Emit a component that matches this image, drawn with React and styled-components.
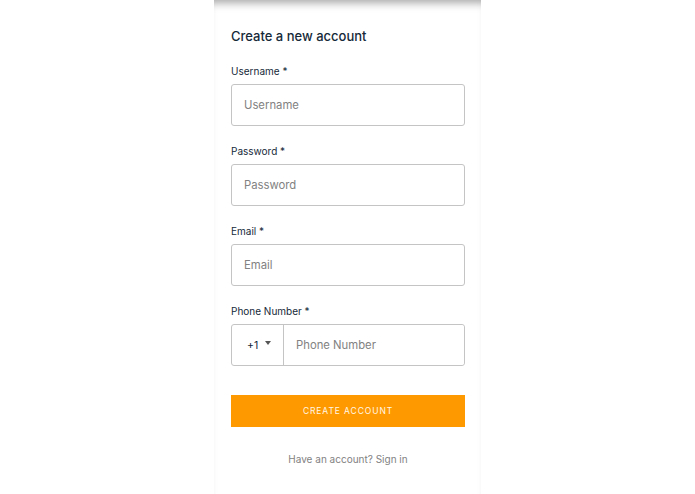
import React from 'react';
import styled, { createGlobalStyle } from 'styled-components';

const GlobalStyle = createGlobalStyle`
  html, body {
    margin: 0;
    padding: 0;
    background: #ffffff;
    font-family: Inter, "Noto Sans", "Liberation Sans", sans-serif;
  }
`;

const Page = styled.div`
  display: flex;
  justify-content: center;
  width: 695px;
  height: 494px;
  overflow: hidden;
`;

const Card = styled.section`
  width: 267px;
  box-sizing: border-box;
  padding: 27px 16px 0 17px;
  background: #fff;
  box-shadow: inset 0 9px 8px -6px rgba(0, 0, 0, 0.35);
`;

const Title = styled.h2`
  margin: 0 0 19px;
  font-size: 13px;
  font-weight: 500;
  color: #152939;
  line-height: 18px;
`;

const Field = styled.div`
  display: flex;
  flex-direction: column;
  margin-bottom: ${(p) => p.gap || 18}px;
`;

const Label = styled.label`
  font-size: 10px;
  color: #152939;
  line-height: 14px;
  margin-bottom: 6px;
`;

const Input = styled.input`
  box-sizing: border-box;
  width: 100%;
  height: 42px;
  padding: 0 12px;
  border: 1px solid #c4c4c4;
  border-radius: 3px;
  font-family: inherit;
  font-size: 11.3px;
  color: #152939;
  outline: none;
  &::placeholder {
    color: #828282;
  }
`;

const PhoneRow = styled.div`
  display: flex;
  height: 42px;
  box-sizing: border-box;
  border: 1px solid #c4c4c4;
  border-radius: 3px;
`;

const CodeSelect = styled.div`
  display: flex;
  align-items: center;
  gap: 7px;
  width: 52px;
  box-sizing: border-box;
  padding-left: 15px;
  border-right: 1px solid #c4c4c4;
  font-size: 10.5px;
  color: #152939;
`;

const Caret = styled.span`
  width: 0;
  height: 0;
  margin-top: -5px;
  border-left: 3.5px solid transparent;
  border-right: 3.5px solid transparent;
  border-top: 4px solid #555;
`;

const PhoneInput = styled(Input)`
  border: none;
  height: 100%;
  flex: 1;
`;

const Button = styled.button`
  width: 100%;
  height: 32px;
  margin-top: 11px;
  border: none;
  border-radius: 0;
  background: #ff9900;
  color: #fff7e6;
  font-family: inherit;
  font-size: 8.5px;
  letter-spacing: 0.9px;
  text-transform: uppercase;
`;

const Footer = styled.p`
  margin: 26px 0 0;
  text-align: center;
  font-size: 10px;
  color: #828282;
`;

export default function App() {
  return (
    <>
      <GlobalStyle />
      <Page>
        <Card>
          <Title>Create a new account</Title>
          <Field>
            <Label>Username *</Label>
            <Input placeholder='Username' />
          </Field>
          <Field>
            <Label>Password *</Label>
            <Input placeholder='Password' type='password' />
          </Field>
          <Field>
            <Label>Email *</Label>
            <Input placeholder='Email' />
          </Field>
          <Field>
            <Label>Phone Number *</Label>
            <PhoneRow>
              <CodeSelect>
                +1 <Caret />
              </CodeSelect>
              <PhoneInput placeholder='Phone Number' />
            </PhoneRow>
          </Field>
          <Button>Create Account</Button>
          <Footer>Have an account? Sign in</Footer>
        </Card>
      </Page>
    </>
  );
}
